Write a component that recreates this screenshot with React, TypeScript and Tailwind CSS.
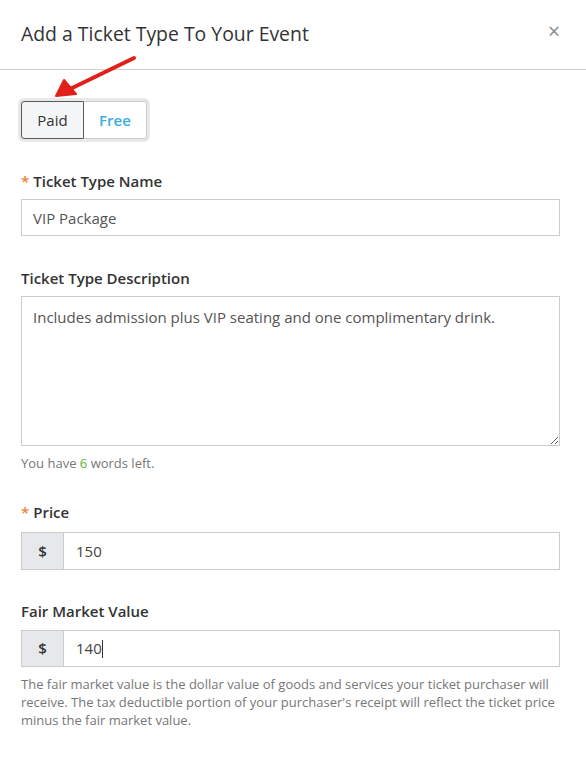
import React from 'react';

export default function App() {
  return (
    <div className="w-[586px] h-[764px] bg-white text-[#333] overflow-hidden" style={{ fontFamily: '"Open Sans", sans-serif' }}>
      {/* header */}
      <div className="relative flex items-center justify-between h-[70px] pl-[21px] pr-[26px] border-b border-[#cfcfcf]">
        <h2 className="text-[19.4px] text-[#333] leading-none pb-[2px]">Add a Ticket Type To Your Event</h2>
        <button className="text-[#888] text-[21px] leading-none pb-[7px]">×</button>
      </div>

      <div className="relative pl-[21px] pr-[26px]">
        {/* red arrow */}
        <svg className="absolute left-[50px] top-[-16px]" width="92" height="46" viewBox="0 0 92 46">
          <path d="M84 4 L18 36" stroke="#e0201a" strokeWidth="4" strokeLinecap="round" />
          <path d="M6 42 L14 26 L26 40 Z" fill="#e0201a" stroke="#e0201a" strokeWidth="2" strokeLinejoin="round" />
        </svg>

        {/* paid / free toggle */}
        <div className="flex pt-[31px]">
          <div className="flex rounded-[3px] shadow-[0_0_0_3px_#e9e9e9]">
            <button className="w-[63px] h-[38px] border border-[#5a5a5a] bg-[#f4f5f7] rounded-l-[3px] text-[15px] text-[#333]">Paid</button>
            <button className="w-[63px] h-[38px] border border-l-0 border-[#ccc] bg-white rounded-r-[3px] text-[15px] font-semibold text-[#3aaee0]">Free</button>
          </div>
        </div>

        {/* name */}
        <label className="block mt-[32px] text-[15px] font-semibold leading-[20px]">
          <span className="text-[#f07f3c] mr-[4px]">*</span>Ticket Type Name
        </label>
        <input
          className="block w-full h-[37px] mt-[8px] border border-[#ccc] px-[11px] text-[15px] text-[#555] outline-none"
          defaultValue="VIP Package"
        />

        {/* description */}
        <label className="block mt-[32px] text-[15px] font-semibold leading-[20px]">Ticket Type Description</label>
        <textarea
          className="block w-full h-[150px] mt-[8px] border border-[#ccc] px-[11px] py-[9px] text-[15px] text-[#555] outline-none resize-y"
          defaultValue="Includes admission plus VIP seating and one complimentary drink."
        />
        <p className="mt-[8px] text-[13px] text-[#777] leading-[18px]">
          You have <span className="text-[#5cb030]">6</span> words left.
        </p>

        {/* price */}
        <label className="block mt-[30px] text-[15px] font-semibold leading-[20px]">
          <span className="text-[#f07f3c] mr-[4px]">*</span>Price
        </label>
        <div className="flex mt-[10px] h-[38px] border border-[#ccc]">
          <span className="w-[42px] flex items-center justify-center bg-[#e6e8eb] border-r border-[#ccc] text-[15px] font-semibold">$</span>
          <input className="flex-1 px-[12px] text-[15px] text-[#444] outline-none" defaultValue="150" />
        </div>

        {/* fair market value */}
        <label className="block mt-[31px] text-[15px] font-semibold leading-[20px]">Fair Market Value</label>
        <div className="flex mt-[9px] h-[37px] border border-[#ccc]">
          <span className="w-[42px] flex items-center justify-center bg-[#e6e8eb] border-r border-[#ccc] text-[15px] font-semibold">$</span>
          <div className="flex-1 flex items-center px-[12px] text-[15px] text-[#444]">
            140<span className="inline-block w-px h-[18px] bg-[#333]" />
          </div>
        </div>
        <p className="mt-[8px] text-[13px] text-[#777] leading-[18px]">
          The fair market value is the dollar value of goods and services your ticket purchaser will receive. The tax deductible portion of your purchaser's receipt will reflect the ticket price minus the fair market value.
        </p>
      </div>
    </div>
  );
}
